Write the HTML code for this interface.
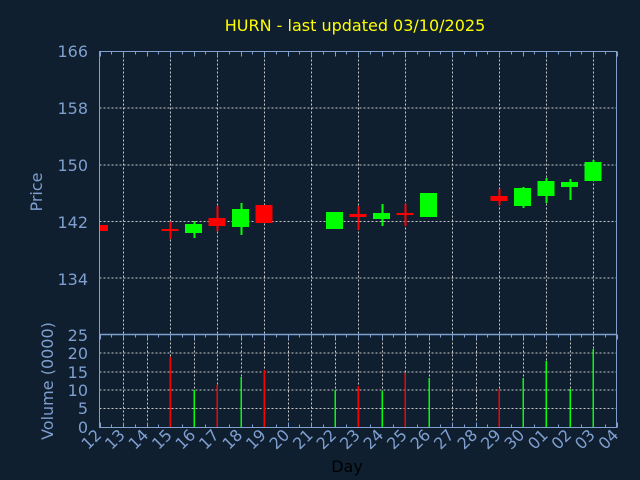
<!DOCTYPE html>
<html><head><meta charset="utf-8"><style>
html,body{margin:0;padding:0;background:#0f1f30;}
svg{display:block;font-family:"DejaVu Sans",sans-serif;}
</style></head><body>
<svg id="s" width="640" height="480" viewBox="0 0 640 480" xmlns="http://www.w3.org/2000/svg">
<rect width="640" height="480" fill="#0f1f30"/>
<text x="355" y="31" fill="#ffff00" font-size="16" text-anchor="middle">HURN - last updated 03/10/2025</text>
<g id="g"></g>
<text transform="translate(42,192) rotate(-90)" fill="#7f9fcf" font-size="16" text-anchor="middle">Price</text>
<text transform="translate(53,381) rotate(-90)" fill="#7f9fcf" font-size="16" text-anchor="middle">Volume (0000)</text>
<text x="347" y="472" fill="#000" font-size="16" text-anchor="middle">Day</text>
</svg>
<script>
var g=document.getElementById('g'),h='';
var L=99.5,R=616.5,T=51.5,M=334.5,B=427.5,dx=23.5,ax='#7f9fcf';
function X(i){return L+i*dx;}
[108,165,221.5,278].forEach(function(y){h+='<line x1="'+L+'" x2="'+R+'" y1="'+y+'" y2="'+y+'" stroke="#c8c8c8" stroke-dasharray="2,2"/>';});
for(var i=1;i<22;i++){var x=Math.round(X(i))+0.5;
 if(i%2==1) h+='<line x1="'+x+'" x2="'+x+'" y1="'+T+'" y2="'+M+'" stroke="#c8c8c8" stroke-dasharray="2,2"/>';
 h+='<line x1="'+x+'" x2="'+x+'" y1="'+M+'" y2="'+B+'" stroke="#c8c8c8" stroke-dasharray="2,2"/>';}
[353,372,390,408.5].forEach(function(y){h+='<line x1="'+L+'" x2="'+R+'" y1="'+y+'" y2="'+y+'" stroke="#c8c8c8" stroke-dasharray="2,2"/>';});
for(var i=0;i<=44;i++){var x=Math.round(L+i*dx/2)+0.5,l=(i%2?3:5);
 h+='<line x1="'+x+'" x2="'+x+'" y1="'+T+'" y2="'+(T+l)+'" stroke="'+ax+'"/>';
 h+='<line x1="'+x+'" x2="'+x+'" y1="'+M+'" y2="'+(M+l)+'" stroke="'+ax+'"/>';
 h+='<line x1="'+x+'" x2="'+x+'" y1="'+B+'" y2="'+(B-l)+'" stroke="'+ax+'"/>';}
var C=[[0,'r',225,231,225,231],[3,'r',229,231,222,239],[4,'g',224,233,221,238],[5,'r',218,226,206,231],[6,'g',209,227,203,235],[7,'r',205,223,205,223],
[10,'g',212,229,212,229],[11,'r',214,217,206,230],[12,'g',213,219,204,226],[13,'r',213,215,204,226],[14,'g',193,217,193,217],
[17,'r',196,201,189,205],[18,'g',188,206,187,208],[19,'g',181,196,178,203],[20,'g',182,187,179,200],[21,'g',162,181,160,181]];
C.forEach(function(c){var x=X(c[0]),col=c[1]=='r'?'#ff0000':'#00ff00';
 h+='<rect x="'+(Math.round(x)-0.5)+'" y="'+c[4]+'" width="2" height="'+(c[5]-c[4])+'" fill="'+col+'"/>';
 var x0=c[0]==0?L:x-8.5,w=c[0]==0?8.5:17;
 h+='<rect x="'+x0+'" y="'+c[2]+'" width="'+w+'" height="'+Math.max(2,c[3]-c[2])+'" fill="'+col+'"/>';});
var V=[[3,'r',357],[4,'g',390],[5,'r',385],[6,'g',377],[7,'r',370],[10,'g',390],[11,'r',386],[12,'g',391],[13,'r',373],[14,'g',378],[17,'r',389],[18,'g',378],[19,'g',361],[20,'g',389],[21,'g',349]];
V.forEach(function(v){var x=Math.round(X(v[0]))-0.5;h+='<rect x="'+x+'" y="'+v[2]+'" width="1.5" height="'+(427-v[2])+'" fill="'+(v[1]=='r'?'#ff0000':'#00ff00')+'"/>';});
h+='<rect x="'+L+'" y="'+T+'" width="'+(R-L)+'" height="'+(B-T)+'" fill="none" stroke="'+ax+'"/>';
h+='<line x1="'+L+'" x2="'+R+'" y1="'+M+'" y2="'+M+'" stroke="'+ax+'" stroke-width="1.5"/>';
[[166,56],[158,113],[150,170],[142,227],[134,284]].forEach(function(p){h+='<text x="88" y="'+(p[1]+1)+'" fill="'+ax+'" font-size="16" text-anchor="end">'+p[0]+'</text>';});
[[25,341],[20,359],[15,378],[10,396],[5,414],[0,433]].forEach(function(p){h+='<text x="88" y="'+p[1]+'" fill="'+ax+'" font-size="16" text-anchor="end">'+p[0]+'</text>';});
var D=['12','13','14','15','16','17','18','19','20','21','22','23','24','25','26','27','28','29','30','01','02','03','04'];
D.forEach(function(d,i){var x=X(i)+3,y=436;h+='<text transform="translate('+x+','+y+') rotate(-45)" fill="'+ax+'" font-size="16" text-anchor="end">'+d+'</text>';});
g.innerHTML=h;
</script>
</body></html>
